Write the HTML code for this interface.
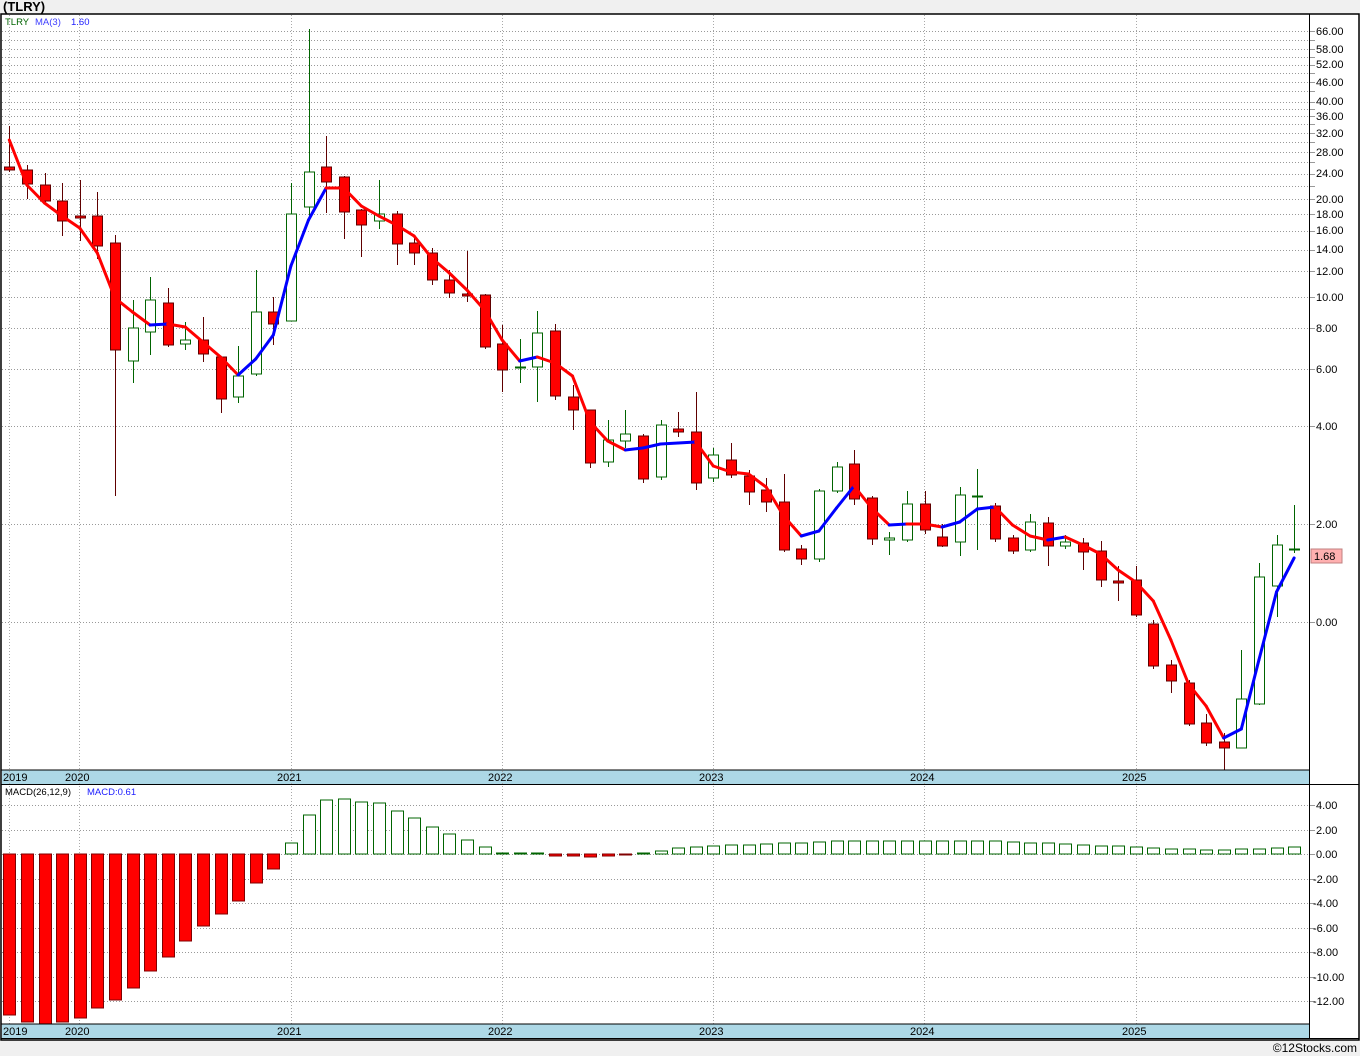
<!DOCTYPE html>
<html><head><meta charset="utf-8"><style>
html,body{margin:0;padding:0;background:#f0f0f0;}
svg{display:block;font-family:"Liberation Sans",Tahoma,sans-serif;}
</style></head><body>
<svg id="s" width="1360" height="1056" xmlns="http://www.w3.org/2000/svg">
<rect x="0" y="0" width="1360" height="1056" fill="#f0f0f0"/>
<rect x="1" y="14" width="1358" height="1026" fill="#fff" stroke="#000" stroke-width="1.5"/>
<rect x="2" y="770" width="1307" height="14" fill="#add8e6"/>
<rect x="2" y="1024" width="1307" height="14" fill="#add8e6"/>
<g id="grid"></g>
<g id="candles"></g>
<g id="ma"></g>
<g id="macd"></g>
<line x1="1" y1="770" x2="1309" y2="770" stroke="#000"/>
<line x1="1" y1="784.5" x2="1359" y2="784.5" stroke="#000"/>
<line x1="1" y1="1024" x2="1309" y2="1024" stroke="#000"/>
<line x1="1" y1="1038.5" x2="1359" y2="1038.5" stroke="#000"/>
<line x1="1309.5" y1="14" x2="1309.5" y2="1039" stroke="#000"/>
<text x="3" y="11" font-size="13" font-weight="bold">(TLRY)</text>
<text x="5" y="25" font-size="9.5" fill="#006400">TLRY</text>
<text x="35" y="25" font-size="9.5" fill="#4040ff">MA(3)</text>
<text x="71" y="25" font-size="9.5" fill="#2020ff">1.60</text>
<text x="5" y="795" font-size="9.5" fill="#000">MACD(26,12,9)</text>
<text x="87" y="795" font-size="9.5" fill="#2020ff">MACD:0.61</text>
<g font-size="11" fill="#000">
<text x="3" y="781">2019</text><text x="65" y="781">2020</text><text x="277" y="781">2021</text><text x="488" y="781">2022</text><text x="699" y="781">2023</text><text x="910" y="781">2024</text><text x="1122" y="781">2025</text>
<text x="3" y="1035">2019</text><text x="65" y="1035">2020</text><text x="277" y="1035">2021</text><text x="488" y="1035">2022</text><text x="699" y="1035">2023</text><text x="910" y="1035">2024</text><text x="1122" y="1035">2025</text>
</g>
<g font-size="11" fill="#000" id="rlab">
<text x="1316" y="35">66.00</text><text x="1316" y="53">58.00</text><text x="1316" y="68">52.00</text><text x="1316" y="86">46.00</text><text x="1316" y="105">40.00</text><text x="1316" y="120">36.00</text><text x="1316" y="137">32.00</text><text x="1316" y="156">28.00</text><text x="1316" y="177">24.00</text><text x="1316" y="203">20.00</text><text x="1316" y="218">18.00</text><text x="1316" y="234">16.00</text><text x="1316" y="253">14.00</text><text x="1316" y="275">12.00</text><text x="1316" y="301">10.00</text><text x="1316" y="332">8.00</text><text x="1316" y="373">6.00</text><text x="1316" y="430">4.00</text><text x="1316" y="528">2.00</text><text x="1316" y="626">0.00</text>
<text x="1316" y="809">4.00</text><text x="1316" y="834">2.00</text><text x="1316" y="858">0.00</text><text x="1313" y="883">-2.00</text><text x="1313" y="907">-4.00</text><text x="1313" y="932">-6.00</text><text x="1313" y="956">-8.00</text><text x="1313" y="981">-10.00</text><text x="1313" y="1005">-12.00</text>
</g>
<rect x="1311" y="549" width="31" height="14" fill="#ffb0b0" stroke="#c08080"/>
<text x="1314" y="560" font-size="11">1.68</text>
<text x="1357" y="1052" font-size="12" text-anchor="end">©12Stocks.com</text>
</svg>
<script>
var NS="http://www.w3.org/2000/svg";
function el(p,t,a){var e=document.createElementNS(NS,t);for(var k in a)e.setAttribute(k,a[k]);p.appendChild(e);return e;}
var g=document.getElementById('grid');
function Y(p){return 297-141*Math.log(p/10);}
[66,62,58,55,52,49,46,43,40,38,36,34,32,30,28,26,24,22,20,18,16,14,12,10,8,6,4,2,1].forEach(function(p){var y=Math.round(Y(p))+0.5;
el(g,'line',{x1:2,x2:1309,y1:y,y2:y,stroke:'#999','stroke-dasharray':'1,2'});el(g,'line',{x1:1309,x2:1315,y1:y,y2:y,stroke:'#999'});});
[805,830,854,879,903,928,952,977,1001].forEach(function(y){y+=0.5;el(g,'line',{x1:2,x2:1309,y1:y,y2:y,stroke:'#999','stroke-dasharray':'1,2'});el(g,'line',{x1:1309,x2:1315,y1:y,y2:y,stroke:'#999'});});
[9,79,291,502,713,924,1136].forEach(function(x){x+=0.5;el(g,'line',{x1:x,x2:x,y1:15,y2:1024,stroke:'#aaa','stroke-dasharray':'1,2'});});
var C=[
['r',167,170,126,172],['r',170,184,165,199],['r',185,201,173,205],['r',201,221,183,236],['r',216,218,180,241],['r',216,246,192,259],['r',243,350,235,496],['g',328,361,300,383],['g',300,332,277,355],['r',303,345,288,347],['g',340,344,322,350],['r',340,354,317,362],['r',357,399,357,413],['g',376,397,346,403],['g',312,374,270,376],['r',312,324,297,345],['g',214,321,183,321],['g',172,207,29,217],['r',167,182,136,213],['r',177,212,176,239],['r',210,225,209,257],['g',214,221,180,229],['r',214,244,211,265],['r',243,253,238,265],['r',253,280,248,285],['r',280,293,270,298],['r',294,296,251,302],['r',295,347,294,349],['r',344,370,325,392],['g',367,368,339,383],['g',333,367,311,402],['r',331,396,324,400],['r',397,410,385,430],['r',410,463,410,468],['g',440,462,420,467],['g',434,441,410,448],['r',436,479,434,483],['g',425,477,420,480],['r',429,432,412,437],['r',432,483,392,490],['g',455,478,448,482],['r',460,475,443,478],['r',476,492,470,505],['r',490,502,478,512],['r',502,550,474,552],['r',549,559,545,565],['g',491,559,489,562],['g',467,491,462,493],['r',464,499,450,505],['r',498,539,496,545],['g',538,540,532,555],['g',504,540,491,542],['r',504,530,491,534],['r',537,546,524,547],['g',495,542,487,556],['g',496,497,469,550],['r',506,539,503,542],['r',538,551,535,554],['g',522,550,514,552],['r',523,546,517,566],['g',542,546,535,549],['r',543,552,538,570],['r',551,580,541,587],['r',581,583,566,601],['r',580,615,566,617],['r',624,666,620,669],['r',665,681,660,693],['r',683,724,680,726],['r',723,743,714,746],['r',742,748,733,770],['g',699,748,650,748],['g',577,704,563,705],['g',545,586,535,617],['g',549,550,505,553]];
var cg=document.getElementById('candles');
function X(i){return 9.3+17.6*i;}
C.forEach(function(c,i){var x=Math.round(X(i))+0.5;var wc=c[0]=='r'?'#600000':'#006400';
el(cg,'line',{x1:x,x2:x,y1:c[3],y2:c[4],stroke:wc});
var h=Math.max(c[2]-c[1],1);
if(c[0]=='r')el(cg,'rect',{x:x-5,y:c[1],width:10,height:h,fill:'#ff0000',stroke:'#600000'});
else el(cg,'rect',{x:x-5,y:c[1],width:10,height:h,fill:'#fff',stroke:'#006400'});});
var M=[140,185,203,216,228,253,298,312,325,324,327,342,357,375,359,335,266,220,188,188,206,216,225,236,258,273,290,310,340,361,357,363,376,422,441,450,448,444,443,442,466,472,474,487,516,536,531,508,486,508,525,524,524,527,522,509,507,525,536,540,537,545,554,570,582,601,640,684,706,738,729,660,592,558];
var mg=document.getElementById('ma');
for(var i=1;i<M.length;i++){el(mg,'line',{x1:X(i-1),y1:M[i-1],x2:X(i),y2:M[i],stroke:M[i]<M[i-1]?'#0000ff':'#ff0000','stroke-width':3,'stroke-linecap':'round'});}
var D=[1015,1022,1024,1022,1018,1008,1000,988,971,957,941,926,914,901,883,869,843,815,800,799,802,803,811,818,827,834,840,847,853,853,853,856,856,857,856,855,853,851,848,847,846,845,845,844,843,843,842,841,841,841,841,841,841,841,841,841,841,842,843,843,844,845,846,846,847,848,849,849,850,850,849,849,848,847];
var dg=document.getElementById('macd');
D.forEach(function(v,i){var x=Math.round(X(i))+0.5;var neg=v>854;var y0=Math.min(v,854),h=Math.max(Math.abs(v-854),1);
if(neg)el(dg,'rect',{x:x-6,y:y0,width:12,height:h,fill:'#ff0000',stroke:'#800000'});
else el(dg,'rect',{x:x-6,y:y0,width:12,height:h,fill:'#fff',stroke:'#006400'});});
</script>
</body></html>
